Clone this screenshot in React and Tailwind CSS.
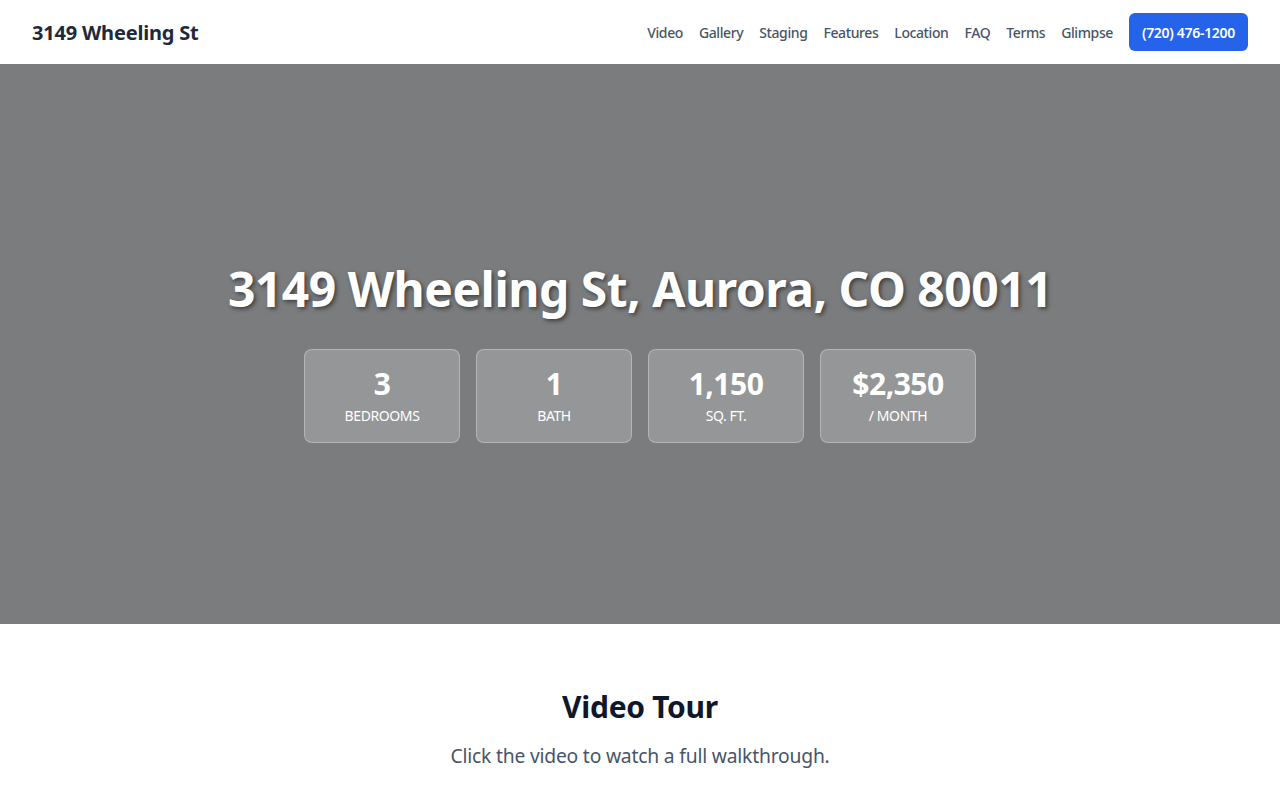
import React from "react";

const font = { fontFamily: '"Noto Sans", "Open Sans", sans-serif' };

export default function App() {
  const links = ["Video", "Gallery", "Staging", "Features", "Location", "FAQ", "Terms", "Glimpse"];
  const stats = [
    ["3", "Bedrooms"],
    ["1", "Bath"],
    ["1,150", "Sq. Ft."],
    ["$2,350", "/ Month"],
  ];
  return (
    <div className="min-h-screen bg-white" style={font}>
      <header className="h-16 flex items-center justify-between px-8 bg-white">
        <div className="text-[20px] font-bold text-[#1e293b] tracking-[-0.2px] mt-[2px]">3149 Wheeling St</div>
        <nav className="flex items-center gap-4">
          {links.map((l) => (
            <a key={l} className="text-[14px] font-medium text-[#475569] tracking-[-0.4px]">{l}</a>
          ))}
          <a className="h-[38px] px-[13px] flex items-center rounded-md bg-[#2563eb] text-white text-[14px] font-semibold tracking-[-0.3px]">
            (720) 476-1200
          </a>
        </nav>
      </header>
      <section className="h-[560px] bg-[#7b7c7e] flex flex-col items-center justify-center">
        <h1
          className="text-[48px] font-bold text-white leading-tight tracking-[-0.5px] mt-[14px]"
          style={{ textShadow: "2px 2px 4px rgba(0,0,0,0.5)" }}
        >
          3149 Wheeling St, Aurora, CO 80011
        </h1>
        <div className="flex gap-4 mt-[30px]">
          {stats.map(([n, l]) => (
            <div
              key={l}
              className="w-[156px] h-[94px] rounded-lg bg-white/20 border border-white/30 flex flex-col items-center justify-center"
            >
              <div className="text-[30px] font-bold text-white leading-none tracking-[-0.5px]">{n}</div>
              <div className="text-[14px] text-white uppercase mt-[10px] leading-none tracking-[-0.4px]">{l}</div>
            </div>
          ))}
        </div>
      </section>
      <section className="pt-[64px] flex flex-col items-center">
        <h2 className="text-[30px] font-bold text-[#0f172a] leading-tight tracking-[-0.3px]">Video Tour</h2>
        <p className="mt-[16px] text-[19.3px] text-[#475569] tracking-[-0.2px]">Click the video to watch a full walkthrough.</p>
      </section>
    </div>
  );
}
